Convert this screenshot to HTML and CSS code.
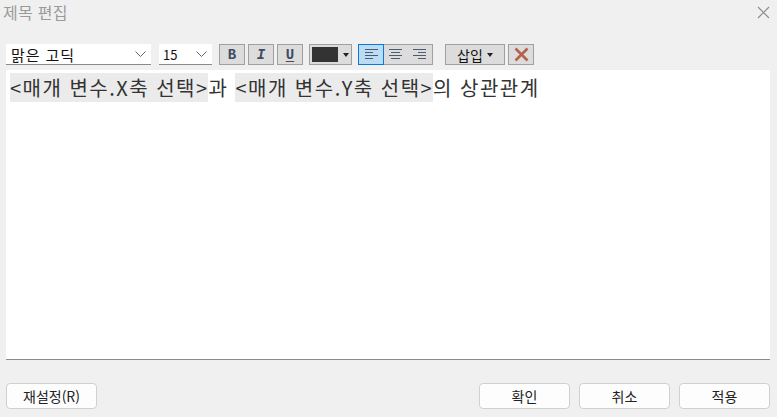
FILE: index.html
```html
<!DOCTYPE html>
<html lang="ko">
<head>
  <meta charset="UTF-8">
  <title>제목 편집</title>
  <link rel="stylesheet" href="styles.css">
</head>
<body>
  <div class="dialog">
    <div class="title-bar">
      <span class="title">제목 편집</span>
      <svg class="close" width="13" height="13" viewBox="0 0 13 13"><path d="M1 1l11 11M12 1L1 12" stroke="#8c8c8c" stroke-width="1.2" fill="none"/></svg>
    </div>
    <div class="toolbar">
      <div class="select font-select">
        <span>맑은 고딕</span>
        <svg width="11" height="6" viewBox="0 0 11 6"><path d="M.5.5l5 5 5-5" stroke="#666" fill="none"/></svg>
      </div>
      <div class="select size-select">
        <span>15</span>
        <svg width="11" height="6" viewBox="0 0 11 6"><path d="M.5.5l5 5 5-5" stroke="#666" fill="none"/></svg>
      </div>
      <div class="btn-group styles">
        <button class="tool bold">B</button>
        <button class="tool italic">I</button>
        <button class="tool underline">U</button>
      </div>
      <button class="tool color-btn"><span class="swatch"></span><span class="caret"></span></button>
      <div class="align-group">
        <button class="align active">
          <svg width="13" height="11" viewBox="0 0 13 11"><path d="M0 .5h13M0 3.500h8M0 6.500h13M0 9.500h8" stroke="#4c5b72"/></svg>
        </button>
        <button class="align">
          <svg width="13" height="11" viewBox="0 0 13 11"><path d="M0 .5h13M2 3.500h9M0 6.500h13M2 9.500h9" stroke="#4c5b72"/></svg>
        </button>
        <button class="align">
          <svg width="13" height="11" viewBox="0 0 13 11"><path d="M0 .5h13M5 3.500h8M0 6.500h13M5 9.500h8" stroke="#4c5b72"/></svg>
        </button>
      </div>
      <button class="tool insert-btn">삽입<span class="caret"></span></button>
      <button class="tool delete-btn">
        <svg width="15" height="15" viewBox="0 0 15 15"><path d="M1.500 1.500l12 12M13.500 1.500l-12 12" stroke="#b5614c" stroke-width="2.600" fill="none"/></svg>
      </button>
    </div>
    <div class="editor">
      <span class="token">&lt;매개 변수.X축 선택&gt;</span>과 <span class="token">&lt;매개 변수.Y축 선택&gt;</span>의 상관관계
    </div>
    <div class="footer">
      <button class="action reset">재설정(R)</button>
      <div class="actions-right">
        <button class="action">확인</button>
        <button class="action">취소</button>
        <button class="action">적용</button>
      </div>
    </div>
  </div>
</body>
</html>
```
FILE: styles.css
```css
html, body {
  margin: 0;
  height: 100%;
}
body {
  background: #f0f0f0;
  font-family: "Noto Sans CJK KR", "Noto Sans", sans-serif;
  color: #222;
  overflow: hidden;
}
button {
  font-family: inherit;
  padding: 0;
}
.dialog {
  height: 417px;
  display: flex;
  flex-direction: column;
  padding: 0 7px 8px 6px;
  box-sizing: border-box;
}
.title-bar {
  height: 44px;
  display: flex;
  justify-content: space-between;
  align-items: flex-start;
  flex-shrink: 0;
}
.title {
  font-size: 16px;
  line-height: 24px;
  letter-spacing: 0.3px;
  color: #9a9a9a;
  margin-left: -3px;
}
.close {
  margin: 6px 0 0 0;
}
.toolbar {
  height: 22px;
  display: flex;
  align-items: stretch;
}
.select {
  background: #fff;
  border-bottom: 1px solid #8a8a8a;
  display: flex;
  align-items: center;
  justify-content: space-between;
  font-size: 15px;
  letter-spacing: 0.9px;
  color: #111;
  box-sizing: border-box;
  padding: 0 5px;
  height: 21px;
}
.font-select {
  width: 145px;
  margin-right: 8px;
}
.size-select {
  width: 53px;
  margin-right: 7px;
  font-size: 13px;
  letter-spacing: 0;
  padding-left: 4px;
}
.btn-group {
  display: flex;
  gap: 3px;
  margin-right: 6px;
}
.tool {
  background: #dcdcdc;
  border: 1px solid #a0a0a0;
  box-sizing: border-box;
  height: 21px;
  display: flex;
  align-items: center;
  justify-content: center;
}
.bold, .italic, .underline {
  width: 26px;
  font-family: "Liberation Mono", monospace;
  font-size: 14px;
  font-weight: bold;
  color: #3f4b5e;
}
.italic {
  font-style: italic;
}
.underline {
  text-decoration: underline;
  text-underline-offset: 2px;
}
.color-btn {
  width: 43px;
  gap: 5px;
  margin-right: 6px;
}
.swatch {
  width: 26px;
  height: 15px;
  background: #333;
}
.caret {
  width: 0;
  height: 0;
  border-left: 3.500px solid transparent;
  border-right: 3.500px solid transparent;
  border-top: 4px solid #222;
}
.align-group {
  display: flex;
  width: 75px;
  height: 21px;
  border: 1px solid #a0a0a0;
  box-sizing: border-box;
  background: #dcdcdc;
  margin-right: 12px;
}
.align {
  flex: 1;
  border: none;
  background: none;
  display: flex;
  align-items: center;
  justify-content: center;
}
.align.active {
  background: #bcdcf4;
  outline: 1px solid #0a78d7;
}
.insert-btn {
  width: 60px;
  gap: 4px;
  font-size: 14px;
  color: #111;
  margin-right: 3px;
}
.delete-btn {
  width: 26px;
}
.editor {
  flex: 1;
  margin-top: 4px;
  background: #fff;
  border-bottom: 1px solid #8a8a8a;
  padding: 4px 4px;
  font-size: 20px;
  letter-spacing: 1.48px;
  line-height: 28px;
  color: #333;
}
.token {
  background: #ebebeb;
}
.footer {
  display: flex;
  justify-content: space-between;
  margin-top: 23px;
  flex-shrink: 0;
}
.actions-right {
  display: flex;
  gap: 9px;
}
.action {
  width: 91px;
  height: 26px;
  background: #fdfdfd;
  border: 1px solid #d0d0d0;
  border-radius: 4px;
  font-size: 14px;
  color: #222;
}
```
